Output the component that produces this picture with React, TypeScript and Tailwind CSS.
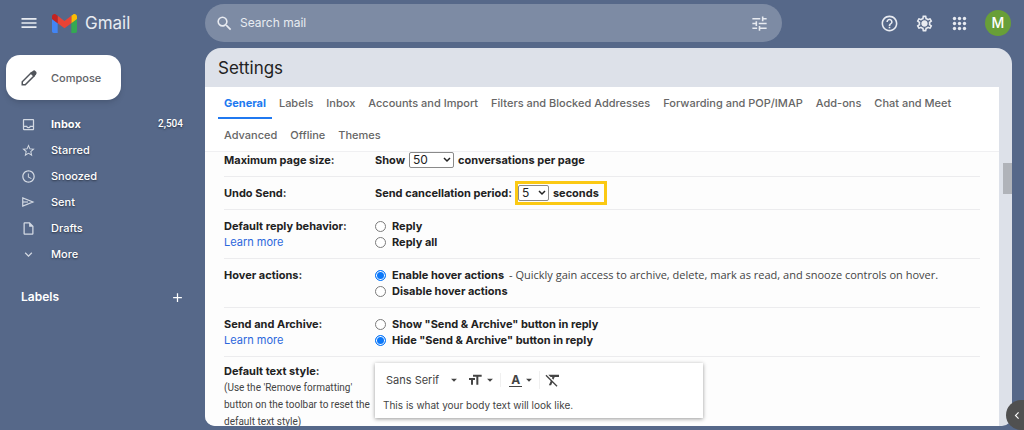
import { useState } from "react"
import type { ReactNode } from "react"
import {
  MdAccessTime,
  MdAdd,
  MdArrowDropDown,
  MdChevronLeft,
  MdExpandMore,
  MdFormatClear,
  MdFormatSize,
  MdHelpOutline,
  MdMenu,
  MdOutlineInbox,
  MdOutlineInsertDriveFile,
  MdOutlineSettings,
  MdSearch,
  MdStarBorder,
  MdTune,
} from "react-icons/md"

const tabs = [
  "General",
  "Labels",
  "Inbox",
  "Accounts and Import",
  "Filters and Blocked Addresses",
  "Forwarding and POP/IMAP",
  "Add-ons",
  "Chat and Meet",
  "Advanced",
  "Offline",
  "Themes",
]

function SendIcon() {
  return (
    <svg viewBox="0 0 24 24" width="14" height="14" fill="none" stroke="currentColor" strokeWidth="2">
      <path d="M3 5v14L20.5 12z" />
      <path d="M3 12h9" />
    </svg>
  )
}

const folders = [
  { name: "Inbox", icon: <MdOutlineInbox size={15} />, count: "2,504" },
  { name: "Starred", icon: <MdStarBorder size={15} /> },
  { name: "Snoozed", icon: <MdAccessTime size={15} /> },
  { name: "Sent", icon: <SendIcon /> },
  { name: "Drafts", icon: <MdOutlineInsertDriveFile size={15} /> },
  { name: "More", icon: <MdExpandMore size={15} /> },
]

function GmailLogo() {
  return (
    <svg viewBox="52 42 88 66" width="25" height="19" aria-hidden="true">
      <path fill="#4285f4" d="M58 108h14V74L52 59v43c0 3.32 2.69 6 6 6" />
      <path fill="#34a853" d="M120 108h14c3.32 0 6-2.69 6-6V59l-20 15" />
      <path fill="#fbbc04" d="M120 48v26l20-15v-8c0-7.42-8.47-11.65-14.4-7.2" />
      <path fill="#ea4335" d="M72 74V48l24 18 24-18v26L96 92" />
      <path fill="#c5221f" d="M52 51v8l20 15V48l-5.6-4.2c-5.94-4.45-14.4-.22-14.4 7.2" />
    </svg>
  )
}

function PencilIcon() {
  return (
    <svg viewBox="0 0 24 24" width="18" height="18" fill="none" stroke="#50545a" strokeWidth="2" aria-hidden="true">
      <path d="M3 21v-4L15 5l4 4L7 21z" />
      <path d="M13.500 5.500L17 2.500q2-1.500 3.500 0l1 1q1.500 1.500 0 3.500L18.500 10.500z" fill="#50545a" stroke="none" />
    </svg>
  )
}

function AppsIcon() {
  return (
    <svg viewBox="0 0 19 19" width="19" height="19" fill="currentColor" aria-hidden="true">
      {[4, 9, 14].map((y) => [4, 9, 14].map((x) => <circle key={`${x}-${y}`} cx={x + 0.5} cy={y + 0.5} r="1.7" />))}
    </svg>
  )
}

function Row({ title, learnMore, note, children }: { title: string; learnMore?: boolean; note?: string; children: ReactNode }) {
  return (
    <section className="mx-[19px] flex border-b border-[#ececee] py-2 last:border-b-0 last:pt-[6px]">
      <div className="w-[151px] shrink-0">
        <h2 className="font-bold">{title}</h2>
        {learnMore && (
          <a href="#learn" className="block text-[#2c67dc]">
            Learn more
          </a>
        )}
        {note && <p className="font-[Roboto] text-[10px] leading-[17px] text-[#444]">{note}</p>}
      </div>
      <div className="min-w-0 flex-1">{children}</div>
    </section>
  )
}

function Option({ name, label, hint, checked }: { name: string; label: string; hint?: string; checked?: boolean }) {
  return (
    <label className="flex h-4 items-center whitespace-nowrap">
      <input
        type="radio"
        name={name}
        defaultChecked={checked}
        className="mr-[6px] h-[11px] w-[11px] appearance-none rounded-full border border-[#7b7b7b] bg-white checked:border-[#0b78fa] checked:bg-[#0b78fa] checked:shadow-[inset_0_0_0_1px_white]"
      />
      <b>{label}</b>
      {hint && <span className="ml-[5px] font-['Open_Sans'] text-[#444]">- {hint}</span>}
    </label>
  )
}

function Picker({ label, options, wide }: { label: string; options: string[]; wide?: boolean }) {
  return (
    <span className={wide ? "relative mx-1 inline-flex w-[45px]" : "relative mr-1 inline-flex w-[31px]"}>
      <select
        aria-label={label}
        className="h-4 w-full appearance-none rounded-[2px] border border-[#8a8a8a] bg-white pl-[3px] text-xs leading-[14px] font-normal"
      >
        {options.map((o) => (
          <option key={o}>{o}</option>
        ))}
      </select>
      <svg
        viewBox="0 0 8 6"
        className="pointer-events-none absolute top-[5px] right-[3px] h-[6px] w-[8px]"
        fill="none"
        stroke="#222"
        strokeWidth="1.500"
      >
        <path d="M1 1l3 3 3-3" />
      </svg>
    </span>
  )
}

export default function App() {
  const [active, setActive] = useState("General")

  return (
    <div className="relative flex h-screen flex-col overflow-hidden bg-[#566889] pb-1 font-[Inter,sans-serif] text-[11px] leading-4 text-[#222]">
      <header className="flex h-12 shrink-0 items-center pb-[2px] text-[#e8ebf1]">
        <div className="flex w-[205px] shrink-0 items-center pl-[19px]">
          <button aria-label="Main menu">
            <MdMenu size={20} />
          </button>
          <a href="#inbox" className="ml-[13px] flex items-center gap-2 text-[17px]">
            <GmailLogo />
            Gmail
          </a>
        </div>
        <div className="flex h-[38px] min-w-0 flex-1 items-center rounded-full bg-[#7d8ba4] pr-[13px] pl-[10px]">
          <MdSearch size={19} />
          <input
            type="text"
            aria-label="Search mail"
            placeholder="Search mail"
            className="ml-[6px] min-w-0 flex-1 bg-transparent text-xs outline-none placeholder:text-[#e8ebf1]"
          />
          <button aria-label="Search options">
            <MdTune size={19} />
          </button>
        </div>
        <div className="flex w-[242px] shrink-0 items-center justify-end gap-4 pr-[13px]">
          <button aria-label="Support">
            <MdHelpOutline size={19} />
          </button>
          <button aria-label="Settings" className="relative">
            <MdOutlineSettings size={19} />
            <span className="absolute inset-0 m-auto h-[5px] w-[5px] rounded-full bg-[#e8ebf1]" />
          </button>
          <button aria-label="Google apps">
            <AppsIcon />
          </button>
          <button aria-label="Account" className="h-[26px] w-[26px] rounded-full bg-[#689f38] text-sm font-medium text-white">
            M
          </button>
        </div>
      </header>

      <div className="flex min-h-0 flex-1">
        <aside className="w-[205px] shrink-0 pt-[7px] text-white">
          <button className="ml-[6px] flex h-[45px] w-[115px] items-center gap-[13px] rounded-[14px] bg-white pl-[14px] font-medium text-[#5f6368] shadow-md">
            <PencilIcon />
            Compose
          </button>
          <nav className="mt-[11px]">
            {folders.map((f) => (
              <a
                key={f.name}
                href={`#${f.name.toLowerCase()}`}
                className="flex h-[26px] items-center pr-[22px] pl-[21px] font-medium first:font-bold text-shadow-[0_1px_2px_rgba(0,0,0,0.5)]"
              >
                <span className="flex w-[30px] text-[#d3d9e3]">{f.icon}</span>
                <span className="flex-1">{f.name}</span>
                {f.count && <span className="font-[Roboto] text-[10px] font-medium">{f.count}</span>}
              </a>
            ))}
          </nav>
          <div className="mt-[22px] flex items-center justify-between pr-5 pl-[21px]">
            <h2 className="text-xs leading-4 font-semibold">Labels</h2>
            <button aria-label="Create new label">
              <MdAdd size={15} />
            </button>
          </div>
        </aside>

        <main className="mr-3 flex min-w-0 flex-1 flex-col overflow-hidden rounded-2xl rounded-b-[10px] bg-[#dde1e9]">
          <h1 className="flex h-[39px] shrink-0 items-center pl-[13px] text-[17px] leading-6">Settings</h1>
          <div className="flex min-h-0 flex-1">
            <div className="min-w-0 flex-1 overflow-hidden bg-[#fdfdfd]">
              <div role="tablist" className="flex flex-wrap gap-x-px border-b border-[#f0f0f2] bg-white pl-[13px]">
                {tabs.map((t) => (
                  <button
                    key={t}
                    role="tab"
                    aria-selected={t === active}
                    onClick={() => setActive(t)}
                    className={
                      t === active
                        ? "h-8 border-b-2 border-[#2079f0] px-[6px] pt-[2px] font-bold text-[#2079f0]"
                        : "h-8 border-b-2 border-transparent px-[6px] pt-[2px] font-medium text-[#666]"
                    }
                  >
                    {t}
                  </button>
                ))}
              </div>

              <div>
                <section className="mx-[19px] flex border-b border-[#ececee] pb-2">
                  <h2 className="w-[151px] shrink-0 font-bold">Maximum page size:</h2>
                  <p className="flex items-center font-bold">
                    Show
                    <Picker label="Maximum page size" options={["50", "25", "100"]} wide />
                    conversations per page
                  </p>
                </section>
                <Row title="Undo Send:">
                  <p className="flex h-4 items-center font-bold">
                    Send cancellation period:
                    <span className="ml-[3px] flex h-6 items-center border-[3px] border-[#fbc913] pr-[5px]">
                      <Picker label="Send cancellation period" options={["5", "10", "20", "30"]} />
                      seconds
                    </span>
                  </p>
                </Row>
                <Row title="Default reply behavior:" learnMore>
                  <Option name="reply" label="Reply" />
                  <Option name="reply" label="Reply all" />
                </Row>
                <Row title="Hover actions:">
                  <Option
                    name="hover"
                    label="Enable hover actions"
                    hint="Quickly gain access to archive, delete, mark as read, and snooze controls on hover."
                    checked
                  />
                  <Option name="hover" label="Disable hover actions" />
                </Row>
                <Row title="Send and Archive:" learnMore>
                  <Option name="archive" label={'Show "Send & Archive" button in reply'} />
                  <Option name="archive" label={'Hide "Send & Archive" button in reply'} checked />
                </Row>
                <Row title="Default text style:" note="(Use the 'Remove formatting' button on the toolbar to reset the default text style)">
                  <div className="w-[328px] bg-white px-2 pb-[5px] text-[#444] shadow-[0_1px_4px_rgba(0,0,0,0.4)]">
                    <div className="flex h-[34px] items-center">
                      <button className="flex items-center gap-2 pl-[3px]">
                        Sans Serif
                        <MdArrowDropDown size={14} />
                      </button>
                      <button aria-label="Size" className="ml-[6px] flex items-center">
                        <MdFormatSize size={16} />
                        <MdArrowDropDown size={14} />
                      </button>
                      <button aria-label="Text color" className="ml-[3px] flex items-center border-l border-[#f0f0f0] pl-2">
                        <span className="border-b border-[#444] px-[2px] text-xs leading-3 font-bold">A</span>
                        <MdArrowDropDown size={14} />
                      </button>
                      <button aria-label="Remove formatting" className="ml-[3px] border-l border-[#f0f0f0] pl-1">
                        <MdFormatClear size={18} />
                      </button>
                    </div>
                    <p className="text-[10px] leading-4">This is what your body text will look like.</p>
                  </div>
                </Row>
              </div>
            </div>
            <div className="flex w-[13px] shrink-0 justify-end pt-[76px]">
              <div className="h-[31px] w-[9px] bg-[#b0b3b9]" />
            </div>
          </div>
        </main>
      </div>

      <button
        aria-label="Show side panel"
        className="absolute right-0 bottom-0 flex h-[30px] w-[18px] items-center justify-center rounded-l-full bg-[#505050] pl-1 text-white"
      >
        <MdChevronLeft size={15} />
      </button>
    </div>
  )
}
